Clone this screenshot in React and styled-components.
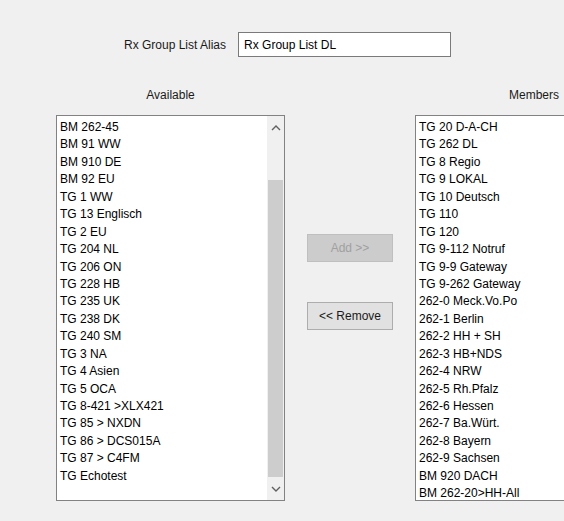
import React from "react";
import styled, { createGlobalStyle } from "styled-components";

const Global = createGlobalStyle`
  html, body { margin: 0; background: #f0f0f0; overflow: hidden; }
  body { font-family: "Liberation Sans", Arial, sans-serif; font-size: 12px; color: #000; }
`;

const Page = styled.div`
  width: 564px;
  height: 521px;
  padding: 32px 0 0 56px;
  box-sizing: border-box;
  overflow: hidden;
`;

const AliasRow = styled.div`
  display: flex;
  align-items: center;
  gap: 12px;
  padding-left: 68px;
  height: 25px;
`;

const Label = styled.span`
  color: #1a1a1a;
`;

const TextInput = styled.div`
  width: 206px;
  height: 23px;
  border: 1px solid #7a7a7a;
  background: #fff;
  display: flex;
  align-items: center;
  padding-left: 5px;
`;

const Columns = styled.div`
  display: grid;
  grid-template-columns: 229px 86px 238px;
  column-gap: 22px;
  margin-top: 31px;
`;

const Heading = styled.div`
  text-align: center;
  height: 27px;
  line-height: 14px;
  color: #1a1a1a;
`;

const ListBox = styled.div`
  height: 386px;
  border: 1px solid #828282;
  background: #fff;
  display: flex;
  box-sizing: border-box;
  overflow: hidden;
`;

const Items = styled.div`
  flex: 1;
  padding: 3px 0 0 3px;
`;

const Item = styled.div`
  height: 17.45px;
  line-height: 17px;
  white-space: nowrap;
`;

const Scrollbar = styled.div`
  width: 17px;
  background: #f0f0f0;
  display: flex;
  flex-direction: column;
  align-items: center;
`;

const Arrow = styled.div`
  height: 22px;
  display: flex;
  align-items: center;
  justify-content: center;
`;

const Track = styled.div`
  flex: 1;
  width: 100%;
  padding-top: 42px;
  box-sizing: border-box;
`;

const Thumb = styled.div`
  height: 297px;
  margin: 0 1px;
  background: #cdcdcd;
`;

const Middle = styled.div`
  padding-top: 146px;
  display: flex;
  flex-direction: column;
  gap: 40px;
`;

const Button = styled.div`
  height: 28px;
  box-sizing: border-box;
  display: flex;
  align-items: center;
  justify-content: center;
  border: 1px solid ${(p) => (p.disabled ? "#bfbfbf" : "#adadad")};
  background: ${(p) => (p.disabled ? "#cccccc" : "#e1e1e1")};
  color: ${(p) => (p.disabled ? "#a0a0a0" : "#1a1a1a")};
`;

const Chevron = ({ up }) => (
  <svg width="10" height="7" viewBox="0 0 10 7">
    <path d={up ? "M1 6 L5 2 L9 6" : "M1 1 L5 5 L9 1"} fill="none" stroke="#606060" strokeWidth="1.4" />
  </svg>
);

const available = [
  "BM 262-45", "BM 91 WW", "BM 910 DE", "BM 92 EU", "TG 1 WW", "TG 13 Englisch",
  "TG 2 EU", "TG 204 NL", "TG 206 ON", "TG 228 HB", "TG 235 UK", "TG 238 DK",
  "TG 240 SM", "TG 3 NA", "TG 4 Asien", "TG 5 OCA", "TG 8-421 >XLX421",
  "TG 85 > NXDN", "TG 86 > DCS015A", "TG 87 > C4FM", "TG Echotest",
];

const members = [
  "TG 20 D-A-CH", "TG 262 DL", "TG 8 Regio", "TG 9 LOKAL", "TG 10 Deutsch", "TG 110",
  "TG 120", "TG 9-112 Notruf", "TG 9-9 Gateway", "TG 9-262 Gateway", "262-0 Meck.Vo.Po",
  "262-1 Berlin", "262-2 HH + SH", "262-3 HB+NDS", "262-4 NRW", "262-5 Rh.Pfalz",
  "262-6 Hessen", "262-7 Ba.Würt.", "262-8 Bayern", "262-9 Sachsen", "BM 920 DACH",
  "BM 262-20>HH-All",
];

export default function App() {
  return (
    <>
      <Global />
      <Page>
        <AliasRow>
          <Label>Rx Group List Alias</Label>
          <TextInput>Rx Group List DL</TextInput>
        </AliasRow>
        <Columns>
          <div>
            <Heading>Available</Heading>
            <ListBox>
              <Items>
                {available.map((t) => (
                  <Item key={t}>{t}</Item>
                ))}
              </Items>
              <Scrollbar>
                <Arrow><Chevron up /></Arrow>
                <Track><Thumb /></Track>
                <Arrow><Chevron /></Arrow>
              </Scrollbar>
            </ListBox>
          </div>
          <Middle>
            <Button disabled>Add &gt;&gt;</Button>
            <Button>&lt;&lt; Remove</Button>
          </Middle>
          <div>
            <Heading>Members</Heading>
            <ListBox>
              <Items>
                {members.map((t) => (
                  <Item key={t}>{t}</Item>
                ))}
              </Items>
            </ListBox>
          </div>
        </Columns>
      </Page>
    </>
  );
}
